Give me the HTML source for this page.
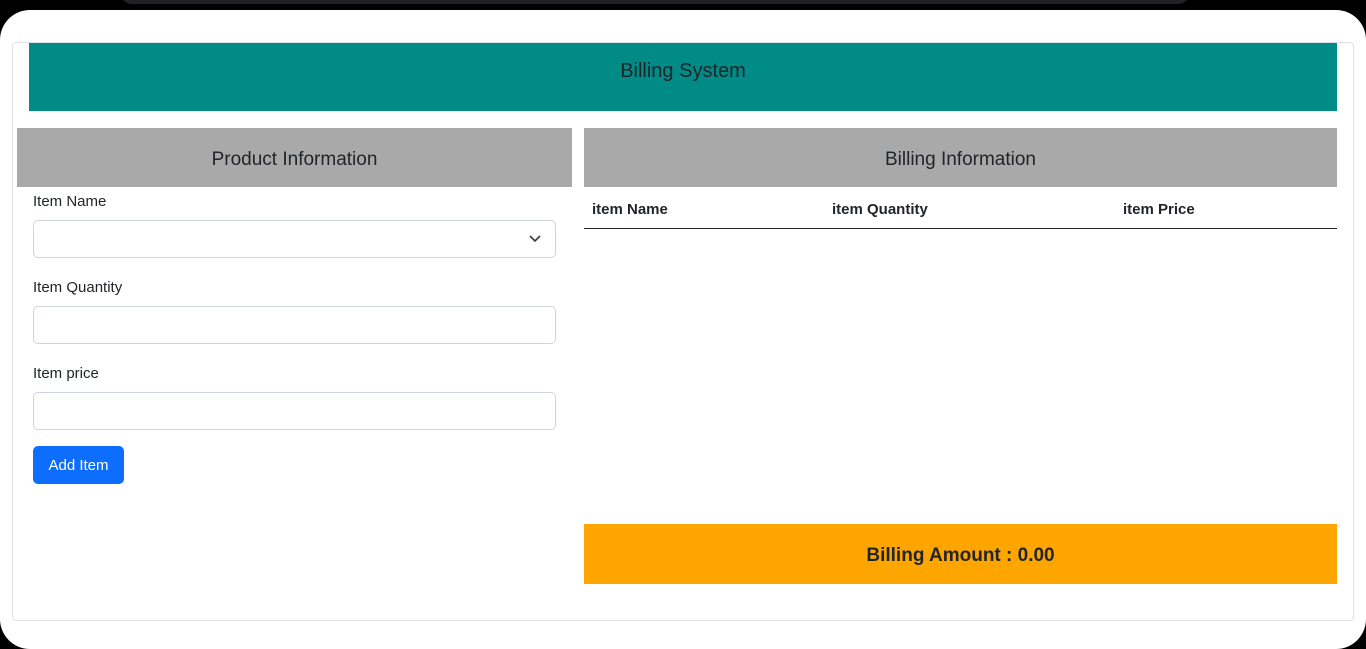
<!DOCTYPE html>
<html><head><style>
*{margin:0;padding:0;box-sizing:border-box}
body{width:1366px;height:649px;background:#000;font-family:"Liberation Sans",sans-serif;color:#212529;position:relative;overflow:hidden}
.tab{position:absolute;left:120px;top:-10px;width:1070px;height:14px;background:#202124;border-radius:0 0 12px 12px}
.page{position:absolute;left:0;top:10px;width:1366px;height:639px;background:#fff;border-radius:30px}
.abs{position:absolute}
.card{left:12px;top:42px;width:1342px;height:579px;border:1px solid #dee2e6;border-radius:4px}
.teal{left:29px;top:43px;width:1308px;height:68px;background:#008b87;display:flex;align-items:center;justify-content:center;font-size:20px;padding-bottom:12px}
.gray{top:128px;height:59px;background:#a9a9a9;display:flex;align-items:center;justify-content:center;font-size:19px;padding-top:4px}
.lbl{left:33px;font-size:15px}
.inp{left:33px;width:523px;height:38px;border:1px solid #ced4da;border-radius:5px;background:#fff}
.btn{left:33px;top:446px;width:91px;height:38px;background:#0d6efd;color:#fff;border-radius:5px;font-size:15px;display:flex;align-items:center;justify-content:center}
.th{top:201px;font-size:15px;font-weight:bold}
.line{left:584px;top:228px;width:753px;height:1px;background:#212529}
.amt{left:584px;top:524px;width:753px;height:60px;background:#ffa500;display:flex;align-items:center;justify-content:center;font-size:19px;font-weight:bold;padding-top:3px}
</style></head><body>
<div class="tab"></div>
<div class="page"></div>
<div class="abs card"></div>
<div class="abs teal">Billing System</div>
<div class="abs gray" style="left:17px;width:555px">Product Information</div>
<div class="abs gray" style="left:584px;width:753px">Billing Information</div>
<div class="abs lbl" style="top:193px">Item Name</div>
<div class="abs inp" style="top:220px"><svg class="abs" style="left:494px;top:13px" width="14" height="10" viewBox="0 0 14 10"><path d="M2 2l5 5 5-5" fill="none" stroke="#343a40" stroke-width="1.6"/></svg></div>
<div class="abs lbl" style="top:279px">Item Quantity</div>
<div class="abs inp" style="top:306px"></div>
<div class="abs lbl" style="top:365px">Item price</div>
<div class="abs inp" style="top:392px"></div>
<div class="abs btn">Add Item</div>
<div class="abs th" style="left:592px">item Name</div>
<div class="abs th" style="left:832px">item Quantity</div>
<div class="abs th" style="left:1123px">item Price</div>
<div class="abs line"></div>
<div class="abs amt">Billing Amount : 0.00</div>
</body></html>
